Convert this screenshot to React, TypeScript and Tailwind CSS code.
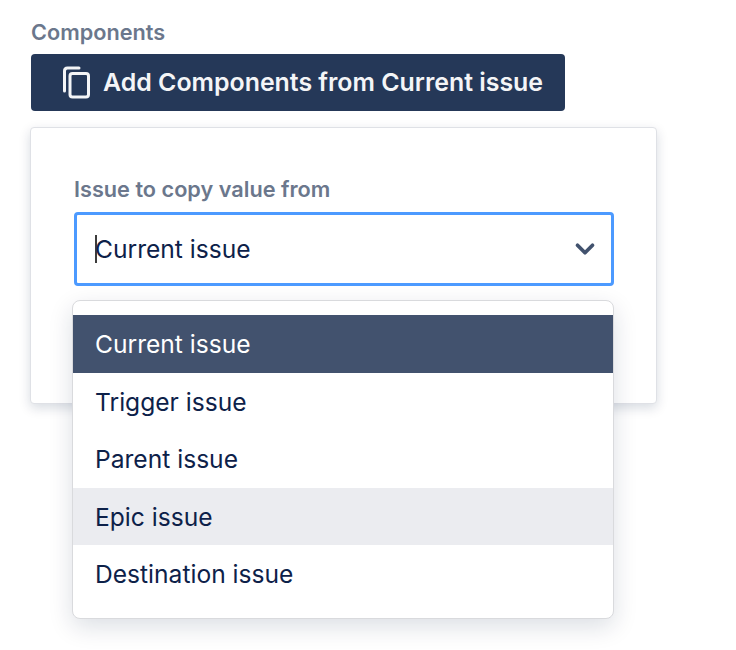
import { ChevronDown } from "lucide-react";

const options = [
  { label: "Current issue", tone: "bg-[#42526e] text-white" },
  { label: "Trigger issue", tone: "text-[#0d2149]" },
  { label: "Parent issue", tone: "text-[#0d2149]" },
  { label: "Epic issue", tone: "bg-[#ebecf0] text-[#0d2149]" },
  { label: "Destination issue", tone: "text-[#0d2149]" },
];

function CopyIcon() {
  return (
    <svg className="h-[33px] w-[30px] shrink-0" viewBox="0 0 30 33" fill="none" stroke="#f4f5f7" strokeWidth="3">
      <path d="M2.5 25V5C2.5 3 3.5 2 5.5 2H17" strokeLinecap="round" />
      <rect x="8" y="7.5" width="18.5" height="23.5" rx="2.5" />
    </svg>
  );
}

export default function App() {
  return (
    <div className="min-h-[650px] w-[736px] bg-white pt-[20px] pl-[31px] font-['Inter',sans-serif]">
      <div className="text-[21.7px] leading-[24px] font-semibold text-[#6b778c]">Components</div>

      <button
        type="button"
        className="mt-[10px] flex h-[57px] w-[534px] items-center gap-[11px] rounded-[4px] bg-[#253858] pl-[31px] text-[24.9px] font-semibold text-[#f4f5f7]"
      >
        <CopyIcon />
        Add Components from Current issue
      </button>

      <div className="relative mt-[16px] -ml-px h-[277px] w-[627px] rounded-[4px] border border-[#dfe1e6] bg-white pt-[49px] pl-[43px] shadow-[0_4px_12px_rgba(9,30,66,0.16)]">
        <div className="text-[21.7px] leading-[24px] font-semibold text-[#6b778c]">Issue to copy value from</div>

        <div className="mt-[11px] flex h-[74px] w-[540px] items-center rounded-[4px] border-[3px] border-[#4c9aff] bg-white pr-[11px] pl-[18px]">
          <span className="-mr-[2px] h-[28px] w-[2px] bg-[#3c3c3c]" />
          <span className="text-[24.6px] leading-[28px] text-[#0d2149]">Current issue</span>
          <ChevronDown className="ml-auto size-[30px] text-[#42526e]" strokeWidth={3} />
        </div>

        {/* Open menu sits over the card */}
        <div className="absolute top-[172px] left-[41px] w-[542px] overflow-hidden rounded-[8px] border border-[#d9dadd] bg-white pt-[14px] pb-[15px] shadow-[0_8px_24px_rgba(9,30,66,0.14)]">
          {options.map((option) => (
            <div key={option.label} className={`flex h-[57.5px] items-center pt-[2px] pl-[22px] text-[24.6px] ${option.tone}`}>
              {option.label}
            </div>
          ))}
        </div>
      </div>
    </div>
  );
}
